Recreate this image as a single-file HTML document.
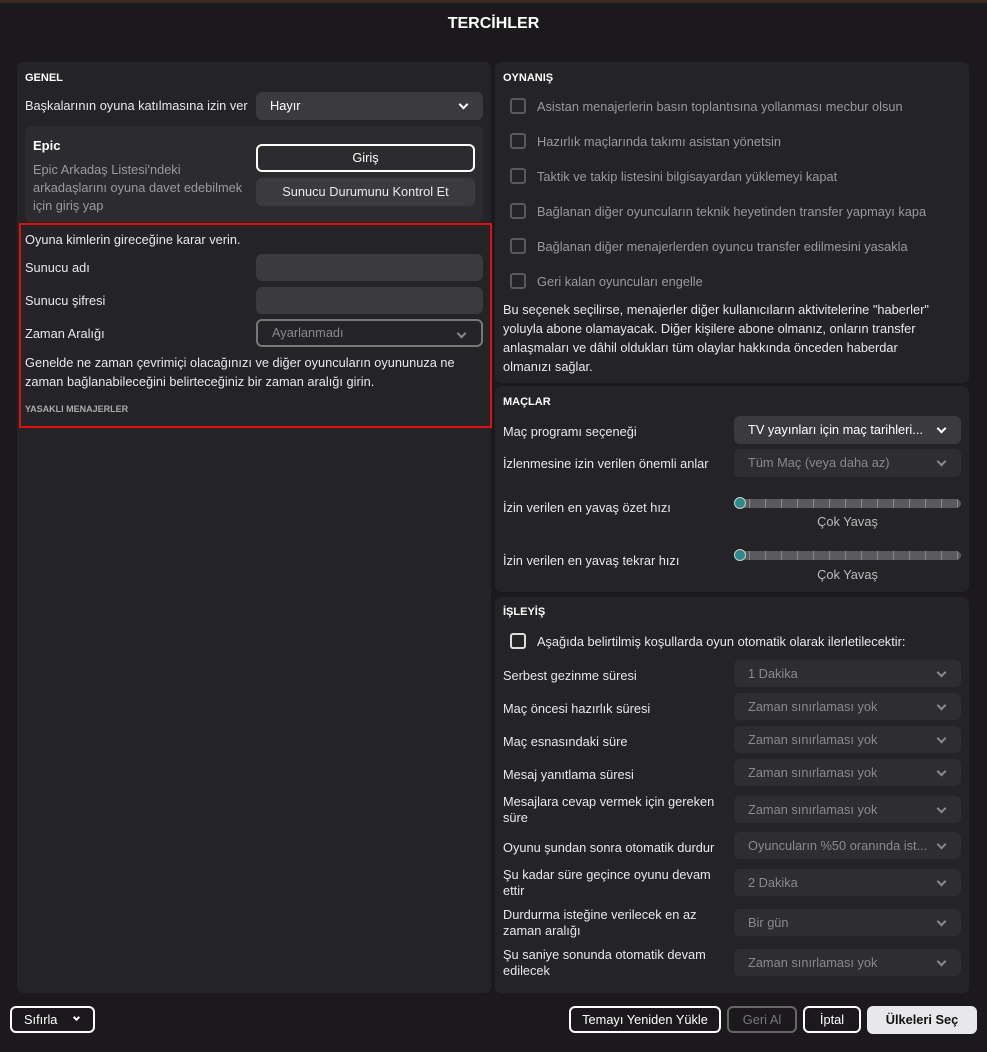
<!DOCTYPE html><html><head><meta charset="utf-8"><style>
*{box-sizing:border-box;margin:0;padding:0}
body{width:987px;height:1052px;background:#1b191c;font-family:"Liberation Sans",sans-serif;color:#e8e8ea;font-size:12.8px;position:relative;overflow:hidden}
.a{position:absolute}
.p{position:absolute;background:#242326;border-radius:6px}
.h{position:absolute;font-weight:bold;font-size:11px;color:#fff}
.in{position:absolute;background:#3b3a3e;border-radius:6px}
.dd{position:absolute;background:#3b3a3e;border-radius:6px;padding-left:14px;line-height:27px;color:#fff}
.dd.dis{background:#2e2d30;color:#8a898c}
.dd:after{content:"";position:absolute;right:16px;top:9px;width:5px;height:5px;border-right:2px solid currentColor;border-bottom:2px solid currentColor;transform:rotate(45deg)}
.cb{position:absolute;width:16px;height:16px;border:2px solid #5a595c;border-radius:3px}
.t{position:absolute;white-space:nowrap}
.g{color:#9a999c}
.btn{position:absolute;border:2px solid #fff;border-radius:6px;text-align:center;color:#fff}
.sl{position:absolute;height:9px;background:#5a595c;border-radius:5px;background-image:repeating-linear-gradient(90deg,transparent 0 15px,#888 15px 16px)}
.kn{position:absolute;width:12px;height:12px;border-radius:50%;background:#2a8a8e;border:1px solid #ccc}
</style></head><body>
<div class="a" style="left:0;top:0;width:987px;height:3px;background:#3a2a22"></div>
<div class="t" style="left:0;width:987px;top:15px;text-align:center;font-weight:bold;font-size:16px;color:#fff">TERCİHLER</div>

<div class="p" style="left:17px;top:62px;width:474px;height:931px"></div>
<div class="h" style="left:25px;top:72px">GENEL</div>
<div class="t" style="left:25px;top:98px">Başkalarının oyuna katılmasına izin ver</div>
<div class="dd" style="left:256px;top:92px;width:227px;height:28px">Hayır</div>
<div class="a" style="left:25px;top:126px;width:458px;height:96px;background:#2c2b2e;border-radius:6px"></div>
<div class="t" style="left:33px;top:138px;font-weight:bold;font-size:13px;color:#fff">Epic</div>
<div class="a g" style="left:33px;top:161px;line-height:18px;width:220px">Epic Arkadaş Listesi'ndeki arkadaşlarını oyuna davet edebilmek için giriş yap</div>
<div class="btn" style="left:256px;top:144px;width:219px;height:28px;line-height:24px">Giriş</div>
<div class="a" style="left:256px;top:178px;width:219px;height:28px;line-height:28px;background:#3b3a3e;border-radius:6px;text-align:center">Sunucu Durumunu Kontrol Et</div>
<div class="a" style="left:19px;top:223px;width:473px;height:205px;border:2px solid #e01010"></div>
<div class="t" style="left:25px;top:232px">Oyuna kimlerin gireceğine karar verin.</div>
<div class="t" style="left:25px;top:260px">Sunucu adı</div>
<div class="in" style="left:256px;top:254px;width:227px;height:27px"></div>
<div class="t" style="left:25px;top:293px">Sunucu şifresi</div>
<div class="in" style="left:256px;top:287px;width:227px;height:27px"></div>
<div class="t" style="left:25px;top:326px">Zaman Aralığı</div>
<div class="dd" style="left:256px;top:319px;width:227px;height:28px;background:#242326;border:2px solid #777;color:#8a898c;line-height:24px">Ayarlanmadı</div>
<div class="a" style="left:25px;top:353px;width:440px;line-height:19px">Genelde ne zaman çevrimiçi olacağınızı ve diğer oyuncuların oyununuza ne zaman bağlanabileceğini belirteceğiniz bir zaman aralığı girin.</div>
<div class="h" style="left:25px;top:404px;font-size:9px;color:#aaa">YASAKLI MENAJERLER</div>

<div class="p" style="left:495px;top:62px;width:474px;height:321px"></div>
<div class="h" style="left:503px;top:72px">OYNANIŞ</div>
<div class="cb" style="left:510px;top:98px"></div><div class="t g" style="left:537px;top:99px">Asistan menajerlerin basın toplantısına yollanması mecbur olsun</div>
<div class="cb" style="left:510px;top:133px"></div><div class="t g" style="left:537px;top:134px">Hazırlık maçlarında takımı asistan yönetsin</div>
<div class="cb" style="left:510px;top:168px"></div><div class="t g" style="left:537px;top:169px">Taktik ve takip listesini bilgisayardan yüklemeyi kapat</div>
<div class="cb" style="left:510px;top:203px"></div><div class="t g" style="left:537px;top:204px">Bağlanan diğer oyuncuların teknik heyetinden transfer yapmayı kapa</div>
<div class="cb" style="left:510px;top:238px"></div><div class="t g" style="left:537px;top:239px">Bağlanan diğer menajerlerden oyuncu transfer edilmesini yasakla</div>
<div class="cb" style="left:510px;top:273px"></div><div class="t g" style="left:537px;top:274px">Geri kalan oyuncuları engelle</div>
<div class="a" style="left:503px;top:300px;width:438px;line-height:19px">Bu seçenek seçilirse, menajerler diğer kullanıcıların aktivitelerine "haberler" yoluyla abone olamayacak. Diğer kişilere abone olmanız, onların transfer anlaşmaları ve dâhil oldukları tüm olaylar hakkında önceden haberdar olmanızı sağlar.</div>

<div class="p" style="left:495px;top:386px;width:474px;height:206px"></div>
<div class="h" style="left:503px;top:396px">MAÇLAR</div>
<div class="t" style="left:503px;top:424px">Maç programı seçeneği</div>
<div class="dd" style="left:734px;top:416px;width:227px;height:28px">TV yayınları için maç tarihleri...</div>
<div class="t" style="left:503px;top:456px">İzlenmesine izin verilen önemli anlar</div>
<div class="dd dis" style="left:734px;top:449px;width:227px;height:28px">Tüm Maç (veya daha az)</div>
<div class="t" style="left:503px;top:500px">İzin verilen en yavaş özet hızı</div>
<div class="sl" style="left:734px;top:499px;width:227px"></div><div class="kn" style="left:734px;top:497px"></div>
<div class="t g" style="left:734px;width:227px;text-align:center;top:514px;color:#bbb">Çok Yavaş</div>
<div class="t" style="left:503px;top:553px">İzin verilen en yavaş tekrar hızı</div>
<div class="sl" style="left:734px;top:551px;width:227px"></div><div class="kn" style="left:734px;top:549px"></div>
<div class="t g" style="left:734px;width:227px;text-align:center;top:567px;color:#bbb">Çok Yavaş</div>

<div class="p" style="left:495px;top:597px;width:474px;height:396px"></div>
<div class="h" style="left:503px;top:606px">İŞLEYİŞ</div>
<div class="cb" style="left:510px;top:633px;border-color:#ddd"></div><div class="t" style="left:537px;top:634px">Aşağıda belirtilmiş koşullarda oyun otomatik olarak ilerletilecektir:</div>
<div class="t" style="left:503px;top:668px">Serbest gezinme süresi</div><div class="dd dis" style="left:734px;top:660px;width:227px;height:27px">1 Dakika</div>
<div class="t" style="left:503px;top:701px">Maç öncesi hazırlık süresi</div><div class="dd dis" style="left:734px;top:693px;width:227px;height:27px">Zaman sınırlaması yok</div>
<div class="t" style="left:503px;top:734px">Maç esnasındaki süre</div><div class="dd dis" style="left:734px;top:726px;width:227px;height:27px">Zaman sınırlaması yok</div>
<div class="t" style="left:503px;top:767px">Mesaj yanıtlama süresi</div><div class="dd dis" style="left:734px;top:759px;width:227px;height:27px">Zaman sınırlaması yok</div>
<div class="a" style="left:503px;top:794px;width:220px;line-height:16px">Mesajlara cevap vermek için gereken süre</div><div class="dd dis" style="left:734px;top:796px;width:227px;height:27px">Zaman sınırlaması yok</div>
<div class="t" style="left:503px;top:840px">Oyunu şundan sonra otomatik durdur</div><div class="dd dis" style="left:734px;top:832px;width:227px;height:27px">Oyuncuların %50 oranında ist...</div>
<div class="a" style="left:503px;top:867px;width:220px;line-height:16px">Şu kadar süre geçince oyunu devam ettir</div><div class="dd dis" style="left:734px;top:869px;width:227px;height:27px">2 Dakika</div>
<div class="a" style="left:503px;top:907px;width:220px;line-height:16px">Durdurma isteğine verilecek en az zaman aralığı</div><div class="dd dis" style="left:734px;top:909px;width:227px;height:27px">Bir gün</div>
<div class="a" style="left:503px;top:947px;width:220px;line-height:16px">Şu saniye sonunda otomatik devam edilecek</div><div class="dd dis" style="left:734px;top:949px;width:227px;height:27px">Zaman sınırlaması yok</div>

<div class="btn" style="left:10px;top:1006px;width:85px;height:27px;line-height:23px;text-align:left;padding-left:12px">Sıfırla<span style="position:absolute;right:14px;top:7px;width:5px;height:5px;border-right:2px solid #fff;border-bottom:2px solid #fff;transform:rotate(45deg)"></span></div>
<div class="btn" style="left:569px;top:1006px;width:152px;height:27px;line-height:23px">Temayı Yeniden Yükle</div>
<div class="btn" style="left:727px;top:1006px;width:70px;height:27px;line-height:23px;border-color:#666;color:#777">Geri Al</div>
<div class="btn" style="left:803px;top:1006px;width:58px;height:27px;line-height:23px">İptal</div>
<div class="a" style="left:867px;top:1006px;width:110px;height:28px;line-height:28px;background:#e8e8ea;color:#111;border-radius:6px;text-align:center;font-weight:bold">Ülkeleri Seç</div>
</body></html>
